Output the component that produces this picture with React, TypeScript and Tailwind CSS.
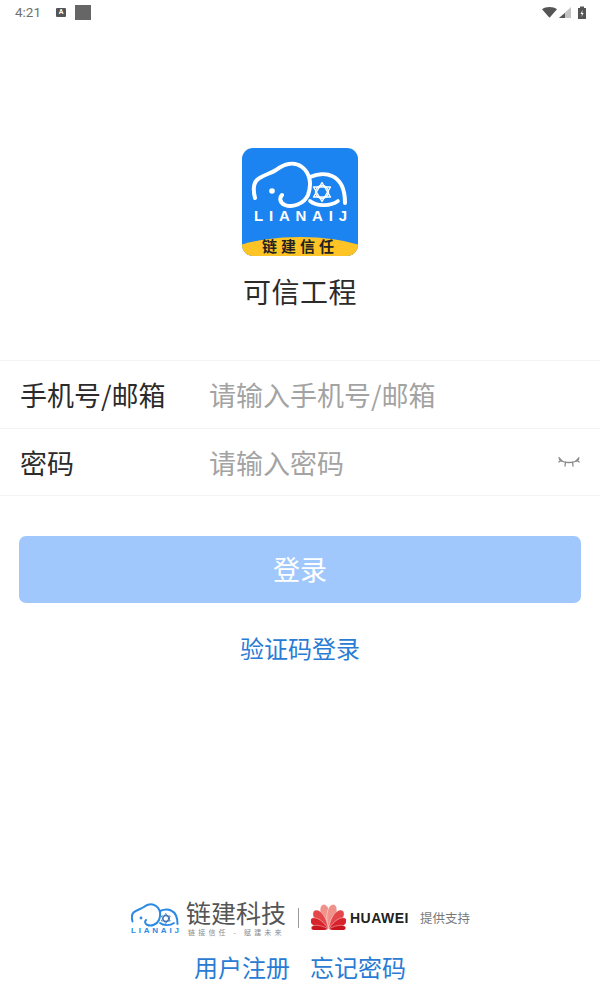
const cjk = "font-['Noto_Sans_CJK_SC','Noto_Sans',sans-serif]";

function ElephantMark({ stroke, star, viewBox, className }: { stroke: string; star: string; viewBox: string; className: string }) {
  return (
    <svg viewBox={viewBox} fill="none" stroke={stroke} strokeLinecap="round" strokeLinejoin="round" className={className}>
      <path d="M13 50 C11 42 11 36 15 32 C20 27 28 26 34 22 C42 16 52 13 60 19 C68 25 70 36 66 47 C62 56 50 60 43 57 C38 55 37 50 40 47" strokeWidth="4" />
      <path d="M68 29 C75 26 84 25 90 28 C99 32 103 42 103 55" strokeWidth="4" />
      <path d="M68 53 C74 58 88 59 96 53" strokeWidth="3.6" />
      <circle cx="30" cy="43" r="2.8" fill={stroke} stroke="none" />
      <g stroke={star} strokeWidth="1.4">
        <circle cx="80" cy="44" r="6.500" />
        <path d="M80 34.500 L88.500 49 H71.500 Z" />
        <path d="M80 53.500 L88.500 39 H71.500 Z" />
      </g>
    </svg>
  );
}

function AppLogo() {
  return (
    <div className="relative h-[108px] w-[116px] overflow-hidden rounded-[11px] bg-[#1b84f0]">
      <ElephantMark stroke="#ffffff" star="#ffffff" viewBox="0 0 116 108" className="absolute inset-0 h-[108px] w-[116px]" />
      <div className="absolute left-[12px] right-[11px] top-[60px] flex justify-between font-['Liberation_Sans',sans-serif] text-[15px] font-bold leading-[16px] text-white">
        {"LIANAIJ".split("").map((c, i) => (
          <span key={i}>{c}</span>
        ))}
      </div>
      <div className="absolute -left-[30px] -right-[30px] top-[89px] h-[60px] rounded-[50%] bg-[#fec426]" />
      <div className={`absolute inset-x-0 top-[89px] text-center text-[15px] font-bold leading-[18px] tracking-[4px] text-[#222222] ${cjk}`}>
        链建信任
      </div>
    </div>
  );
}

const huaweiPetals = [
  { a: 12, l: 26, w: 8, c: "#f0928a" },
  { a: 38, l: 24, w: 8, c: "#e4474a" },
  { a: 62, l: 21, w: 7, c: "#d8222c" },
  { a: 86, l: 18, w: 5, c: "#c9151e" },
];

function HuaweiMark() {
  return (
    <svg viewBox="0 0 36 28" className="h-[27px] w-[35px]">
      {huaweiPetals.flatMap((p) =>
        [-1, 1].map((s) => (
          <path
            key={p.a * s}
            d={`M18 27 C${18 - p.w} ${27 - p.l * 0.6} ${18 - p.w * 0.6} ${27 - p.l} 18 ${27 - p.l} C${18 + p.w * 0.6} ${27 - p.l} ${18 + p.w} ${27 - p.l * 0.6} 18 27 Z`}
            fill={p.c}
            stroke="#ffffff"
            strokeWidth="0.4"
            transform={`rotate(${p.a * s} 18 27)`}
          />
        )),
      )}
    </svg>
  );
}

function Row({ label, hint, className, children }: { label: string; hint: string; className: string; children?: React.ReactNode }) {
  return (
    <div className={`flex items-center border-b border-[#f4f4f4] pl-5 pr-[20px] ${className}`}>
      <span className="w-[189px] text-[27px] leading-none text-[#2b2b2b]">{label}</span>
      <span className="flex-1 text-[27px] leading-none text-[#a3a3a3]">{hint}</span>
      {children}
    </div>
  );
}

export default function App() {
  return (
    <div className={`flex h-[1000px] w-[600px] flex-col overflow-hidden bg-white ${cjk}`}>
      {/* status bar */}
      <div className="flex h-[25px] items-center justify-between pl-[15px] pr-[14px]">
        <div className="flex items-center">
          <span className="font-['Roboto',sans-serif] text-[13.5px] leading-none text-[#707070]">4:21</span>
          <span className="ml-[15px] flex h-[9px] w-[10px] items-center justify-center rounded-[1px] bg-[#555555] font-['Roboto',sans-serif] text-[7px] font-bold leading-none text-white">
            A
          </span>
          <span className="ml-[9px] h-[15px] w-[16px] bg-[#666666]" />
        </div>
        <div className="flex items-center gap-[2px]">
          <svg viewBox="0 0 16 11" className="h-[11px] w-[15px]">
            <path d="M0 2 C4 -1 12 -1 16 2 L8 11 Z" fill="#555555" />
          </svg>
          <svg viewBox="0 0 12 11" className="h-[11px] w-[12px]">
            <path d="M12 0 V11 H0 Z" fill="#c4c4c4" />
            <path d="M6 6 V11 H0 Z" fill="#555555" />
          </svg>
          <svg viewBox="0 0 8 13" className="ml-[5px] h-[13px] w-[8px]">
            <path d="M2 2 V0.5 H6 V2 H8 V13 H0 V2 Z" fill="#555555" />
            <path d="M4.6 4 L2.5 8 H4 L3.4 11 L5.6 7 H4.2 Z" fill="#ffffff" />
          </svg>
        </div>
      </div>

      {/* logo and app name */}
      <div className="mt-[123px] flex flex-col items-center">
        <AppLogo />
        <h1 className="mt-[17px] text-[28px] font-normal leading-[36px] tracking-[0.5px] text-[#2b2b2b]">可信工程</h1>
      </div>

      {/* form */}
      <div className="mt-[51px] border-t border-[#f4f4f4]">
        <Row label="手机号/邮箱" hint="请输入手机号/邮箱" className="h-[68px]" />
        <Row label="密码" hint="请输入密码" className="h-[67px]">
          <svg viewBox="0 0 22 10" fill="none" stroke="#8a8a8a" strokeWidth="1.3" strokeLinecap="round" className="h-[10px] w-[22px]">
            <path d="M1.500 2.500 C6 6.500 16 6.500 20.500 2.500" />
            <path d="M1 0.800 L4 4 M7.500 5.200 L7 9 M14.500 5.200 L15 9 M21 0.800 L18 4 M0.800 5 L3 3.500 M21.200 5 L19 3.500" />
          </svg>
        </Row>
      </div>

      <div className="mt-10 px-[19px]">
        <button className="flex h-[67px] w-full items-center justify-center rounded-[7px] bg-[#a0c8fd] text-[27px] text-white">
          登录
        </button>
      </div>
      <div className="mt-[29px] text-center text-[24px] leading-[32px] text-[#2a7bd4]">验证码登录</div>

      {/* footer */}
      <div className="mt-auto flex flex-col items-center pb-[18px]">
        <div className="flex h-[38px] items-center">
          <div className="flex w-[50px] flex-col items-center">
            <ElephantMark stroke="#2a8ae6" star="#1d5fa8" viewBox="10 11 96 50" className="h-[25px] w-[48px]" />
            <div className="flex w-[48px] justify-between font-['Liberation_Sans',sans-serif] text-[8px] font-bold leading-[8px] text-[#2a8ae6]">
              {"LIANAIJ".split("").map((c, i) => (
                <span key={i}>{c}</span>
              ))}
            </div>
          </div>
          <div className="ml-[6px] flex flex-col">
            <span className="text-[25px] leading-[27px] text-[#555555]">链建科技</span>
            <span className="mt-px pl-[2px] text-[7px] leading-[10px] tracking-[3.2px] whitespace-nowrap text-[#8c8c8c]">链接信任 - 赋建未来</span>
          </div>
          <span className="ml-[12px] h-[20px] w-px bg-[#9a9a9a]" />
          <span className="-mt-[4px] ml-[12px] flex">
            <HuaweiMark />
          </span>
          <span className="ml-[4px] font-['Liberation_Sans',sans-serif] text-[14px] font-bold leading-none tracking-[0.5px] text-[#222222]">
            HUAWEI
          </span>
          <span className="ml-[11px] text-[12.500px] leading-none text-[#777777]">提供支持</span>
        </div>
        <div className="mt-[15px] flex gap-[20px] text-[24px] leading-[30px] text-[#2a7bd4]">
          <span>用户注册</span>
          <span>忘记密码</span>
        </div>
      </div>
    </div>
  );
}
